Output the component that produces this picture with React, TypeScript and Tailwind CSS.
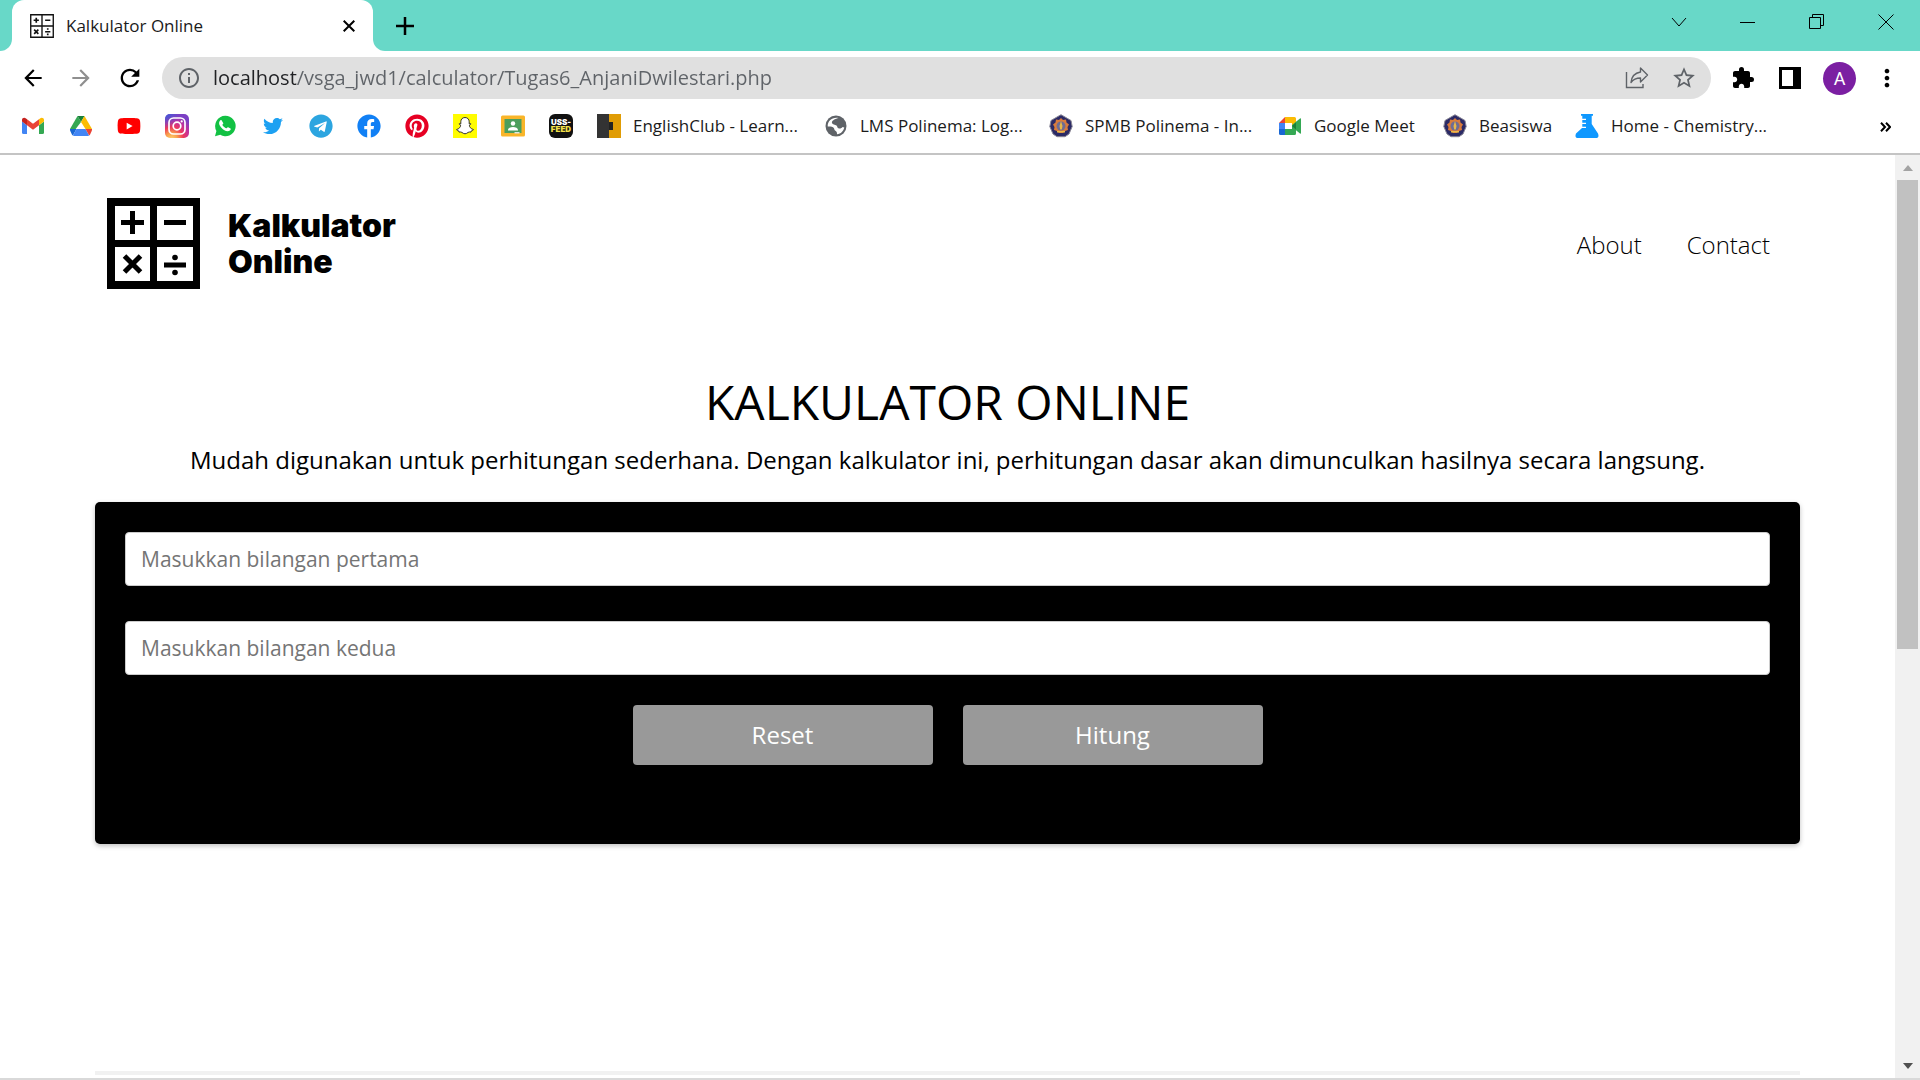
import type { ReactNode } from "react";
import {
  MdArrowBack,
  MdArrowForward,
  MdExtension,
  MdInfoOutline,
  MdMoreVert,
  MdRefresh,
  MdStarBorder,
} from "react-icons/md";
import { FaFacebook, FaPinterest, FaTelegram, FaTwitter, FaYoutube } from "react-icons/fa";

function CalculatorGlyph({ className }: { className: string }) {
  return (
    <svg viewBox="0 0 93 91" className={className} aria-hidden="true">
      <path fill="#000" d="M0 0h93v91H0z" />
      <path fill="#fff" d="M8 8h35v34H8zM50 8h36v34H50zM8 49h35v34H8zM50 49h36v34H50z" />
      <path
        fill="none"
        stroke="#000"
        strokeWidth="5"
        d="M14 24.500h23M25.500 13v23M57 24.500h22M57 67h22M17.500 58l16 16M33.500 58l-16 16"
      />
      <circle cx="68" cy="59.500" r="2.800" />
      <circle cx="68" cy="74.500" r="2.800" />
    </svg>
  );
}

function TabGlyph() {
  return (
    <svg viewBox="0 0 23 23" className="size-6 shrink-0" fill="none" stroke="#111" aria-hidden="true">
      <path strokeWidth="1.300" d="M.7.7h21.600v21.600H.7zM11.500 1v21.500M1 11.500h21.500" />
      <path strokeWidth="1.600" d="M3.500 6h5M6 3.500v5M14.500 6h5M14.500 17h5M4 15l4 4M8 15l-4 4" />
      <path strokeWidth="1.600" d="M17 13.600v1.600M17 18.800v1.600" />
    </svg>
  );
}

function Gmail() {
  return (
    <svg viewBox="0 0 24 24" className="size-6" aria-hidden="true">
      <path fill="#4285f4" d="M1 7.500l5 3.700V20H2.500A1.500 1.500 0 0 1 1 18.500z" />
      <path fill="#34a853" d="M18 11.200l5-3.700v11a1.500 1.500 0 0 1-1.500 1.500H18z" />
      <path fill="#ea4335" d="M6 5.200l6 4.500 6-4.500v6L12 15.700 6 11.200z" />
      <path fill="#c5221f" d="M1 6c0-2 2.300-3 4-1.600l1 .8v6L1 7.500z" />
      <path fill="#fbbc04" d="M23 6c0-2-2.300-3-4-1.600l-1 .8v6l5-3.700z" />
    </svg>
  );
}

function Drive() {
  return (
    <svg viewBox="0 0 24 24" className="size-6" aria-hidden="true">
      <path fill="#34a853" d="M8.500 2L1 15l3 1.500h1.500L12 8z" />
      <path fill="#188038" d="M8.500 2h7L12 8z" />
      <path fill="#fbbc04" d="M15.500 2L23 15h-6.500L12 8z" />
      <path fill="#1967d2" d="M1 15h6.500l-3.700 6.500c-.4-.2-.7-.5-.9-.9L1.300 17c-.3-.6-.4-1.300-.3-2z" />
      <path fill="#4285f4" d="M7.500 15h9l3.700 6.500c-.4.300-.9.500-1.500.5H5.300c-.6 0-1.100-.2-1.500-.5z" />
      <path fill="#ea4335" d="M16.500 15H23c.1.700 0 1.400-.3 2l-1.600 3.600c-.2.400-.5.700-.9.900z" />
    </svg>
  );
}

function Instagram() {
  return (
    <svg viewBox="0 0 24 24" className="size-6" aria-hidden="true">
      <defs>
        <radialGradient id="ig-warm" cx="0.270" cy="1.050" r="1">
          <stop offset="0" stopColor="#fed373" />
          <stop offset="0.250" stopColor="#f9a04b" />
          <stop offset="0.500" stopColor="#ee3a5a" />
          <stop offset="0.750" stopColor="#c22f9c" />
          <stop offset="1" stopColor="#7b3fc4" />
        </radialGradient>
        <radialGradient id="ig-cool" cx="0" cy="0" r="0.600">
          <stop offset="0" stopColor="#3f5bd8" />
          <stop offset="1" stopColor="#3f5bd8" stopOpacity="0" />
        </radialGradient>
      </defs>
      <rect width="24" height="24" rx="5" fill="url(#ig-warm)" />
      <rect width="24" height="24" rx="5" fill="url(#ig-cool)" />
      <rect x="4" y="4" width="16" height="16" rx="4.500" fill="none" stroke="#fff" strokeWidth="1.700" />
      <circle cx="12" cy="12" r="3.800" fill="none" stroke="#fff" strokeWidth="1.700" />
      <circle cx="16.700" cy="7.400" r="1.100" fill="#fff" />
    </svg>
  );
}

function WhatsApp() {
  return (
    <svg viewBox="0 0 24 24" className="size-6" aria-hidden="true">
      <path fill="#12c143" d="M12.200 1.800A10.200 10.200 0 0 0 3.400 17L2 22.200l5.300-1.400A10.200 10.200 0 1 0 12.200 1.800z" />
      <path
        fill="#fff"
        d="M8.700 6.500c-.4-.6-1-.5-1.500 0-2 2-1 4.800 1.200 7.200 2.500 2.700 5.800 4.700 8.500 2.900.9-.7 1.100-1.900.6-2.200l-2.300-1.200c-.4-.2-.7 0-1.500 1-.5.500-3.900-1.700-4.400-3.400.9-1 1.200-1.200.9-1.900z"
      />
    </svg>
  );
}

function Snapchat() {
  return (
    <svg viewBox="0 0 24 24" className="size-6" aria-hidden="true">
      <path fill="#fffc00" d="M0 0h24v24H0z" />
      <path
        fill="#fff"
        stroke="#333"
        strokeWidth="1"
        strokeLinejoin="round"
        d="M12 3.500c-2.700 0-4.200 1.900-4.200 4.300v2.100l-1.600-.2c-.3.700.8 1.100 1.400 1.500.3 1.400-1.600 3.900-4 4.300.1 1 1.400 1.200 2.100 1.400l.4 1.200c1-.2 2-.2 2.800.3.900.6 1.700 1.400 3.100 1.400s2.200-.8 3.100-1.400c.8-.5 1.800-.5 2.800-.3l.4-1.200c.7-.2 2-.4 2.100-1.400-2.400-.4-4.300-2.900-4-4.300.6-.4 1.700-.8 1.400-1.500l-1.600.2V7.800c0-2.400-1.500-4.300-4.200-4.300z"
      />
    </svg>
  );
}

function Classroom() {
  return (
    <svg viewBox="0 0 24 24" className="size-6" aria-hidden="true">
      <rect y="1.500" width="24" height="21" rx="1.500" fill="#f9b529" />
      <path fill="#4c9e5c" d="M3.500 5h17v14h-17z" />
      <circle cx="12" cy="9.500" r="2.200" fill="#fff" />
      <path fill="#fff" d="M7 16c0-2 2.500-3 5-3s5 1 5 3v.6H7z" />
      <path fill="#dfe7df" d="M13.500 18h5v1.500h-5z" />
    </svg>
  );
}

function UssFeed() {
  return (
    <span className="flex size-6 flex-col items-center justify-center rounded-md bg-[#111] font-['Inter'] text-[8px] leading-[7px] font-black text-white">
      <span>USS-</span>
      <span className="text-[#f3e04a]">FEED</span>
    </span>
  );
}

function EnglishClub() {
  return (
    <svg viewBox="0 0 24 24" className="size-6" aria-hidden="true">
      <path fill="#e09c05" d="M12 0h12v24H12z" />
      <path fill="#333" d="M0 0h12v8h4v8h-4v8H0z" />
      <path fill="#222" d="M12 8h4v8h-4z" />
    </svg>
  );
}

function Globe() {
  return (
    <svg viewBox="0 0 24 24" className="size-6" aria-hidden="true">
      <circle cx="12" cy="12" r="10.500" fill="#5f6368" />
      <path
        fill="#fff"
        d="M14.500 4C10 5 7.500 7 8 9c.5 1.800 3 1.500 4.500 2.500 1 .8.500 1.800 1.500 2.500 1.500 1 3.500.5 4.500-1l1.800.5C19.500 17 17 20 13 20.300c.3-2.300-1-3-2-3.800-1-1-.5-2.500-2-3.300-1.500-.7-3.500-.7-5.300-.7C3.500 7 8 3 14.500 4z"
      />
      <path fill="#5f6368" d="M14 4.500c-2 .8-3 2-2.500 3.300.5 1.200 2.500 1 3 2 .5.900 0 2 1.500 2.200 1.500.1 3-.5 4-1.500-.5-3.200-3-5.500-6-6z" />
    </svg>
  );
}

function Polinema() {
  return (
    <svg viewBox="0 0 24 24" className="size-6" aria-hidden="true">
      <path
        fill="#2b2a66"
        stroke="#8a8796"
        strokeWidth="1"
        d="M12 .7l4 2.300 6 3.500 1.200 6L20 20l-4 2.700H8L4 20 .8 12.500l1.200-6L8 3z"
      />
      <path
        fill="#d97b3c"
        d="M12 4l2 2 3-.5.500 3 2.500 2-1.500 2.500.5 3-3 1-2 2h-4l-2-2-3-1 .5-3L4 10.500l2.500-2 .5-3 3 .5z"
      />
      <circle cx="12" cy="12" r="4.500" fill="#6f6c94" />
      <path fill="#e8b84a" d="M12 7l1.500 5-.7 3.500h-1.600l-.7-3.500zM8 17h8v1.500H8z" />
    </svg>
  );
}

function Meet() {
  return (
    <svg viewBox="0 0 24 24" className="size-6" aria-hidden="true">
      <path fill="#ea4335" d="M7 3v6H1z" />
      <path fill="#4285f4" d="M1 9h6v6H1z" />
      <path fill="#1967d2" d="M1 15h6v6H2.500A1.500 1.500 0 0 1 1 19.500z" />
      <path fill="#fbbc04" d="M7 3h9.500A1.500 1.500 0 0 1 18 4.500V12l-4-1V9H7z" />
      <path fill="#34a853" d="M7 21v-6h7v-4l8-6.500c.5-.4 1-.1 1 .5v14c0 .6-.5.900-1 .5l-4-3.300v3.300a1.500 1.500 0 0 1-1.500 1.500z" />
      <path fill="#188038" d="M14 12l4-3.500v7z" />
    </svg>
  );
}

function Flask() {
  return (
    <svg viewBox="0 0 24 24" className="size-6" aria-hidden="true">
      <path
        fill="#0f98ff"
        d="M6 0h12v1.800h-1.300V10l6.300 9.500c1 2.500.5 4.500-2 4.500H3c-2.500 0-3-2-2-4.500L7 14h4v-1.300H7.300V10H11V8.700H7.300V6H11V4.700H7.300V1.800H6z"
      />
    </svg>
  );
}

const shortcuts: { name: string; icon: ReactNode }[] = [
  { name: "Gmail", icon: <Gmail /> },
  { name: "Google Drive", icon: <Drive /> },
  { name: "YouTube", icon: <FaYoutube className="size-6 text-[#f00]" /> },
  { name: "Instagram", icon: <Instagram /> },
  { name: "WhatsApp", icon: <WhatsApp /> },
  { name: "Twitter", icon: <FaTwitter className="size-5 text-[#1da1f2]" /> },
  { name: "Telegram", icon: <FaTelegram className="size-6 text-[#2ca5e0]" /> },
  { name: "Facebook", icon: <FaFacebook className="size-6 text-[#1180f5]" /> },
  { name: "Pinterest", icon: <FaPinterest className="size-6 text-[#e60023]" /> },
  { name: "Snapchat", icon: <Snapchat /> },
  { name: "Google Classroom", icon: <Classroom /> },
  { name: "USS Feed", icon: <UssFeed /> },
];

const bookmarks: { label: string; icon: ReactNode; width: string }[] = [
  { label: "EnglishClub - Learn...", icon: <EnglishClub />, width: "w-[227px]" },
  { label: "LMS Polinema: Log...", icon: <Globe />, width: "w-[225px]" },
  { label: "SPMB Polinema - In...", icon: <Polinema />, width: "w-[229px]" },
  { label: "Google Meet", icon: <Meet />, width: "w-[165px]" },
  { label: "Beasiswa", icon: <Polinema />, width: "w-[132px]" },
  { label: "Home - Chemistry...", icon: <Flask />, width: "w-[194px]" },
];

function TabStrip() {
  return (
    <header className="flex h-[51px] items-stretch bg-[#68d8c8]">
      <div className="w-3 bg-white">
        <div className="h-full rounded-br-xl bg-[#68d8c8]" />
      </div>
      <div className="bg-[#68d8c8]">
        <div className="flex h-full w-[361px] items-center gap-3 rounded-t-xl bg-white pr-3 pl-[18px]">
          <TabGlyph />
          <span className="flex-1 text-[17px] text-[#1b1b1b]">Kalkulator Online</span>
          <button type="button" aria-label="Close tab" className="flex size-6 items-center justify-center">
            <svg viewBox="0 0 12 12" className="size-3" stroke="#000" strokeWidth="2" aria-hidden="true">
              <path d="M.7.7l10.600 10.600M11.300.7L.7 11.300" />
            </svg>
          </button>
        </div>
      </div>
      <div className="flex-1 bg-white">
        <div className="flex h-full items-center rounded-bl-xl bg-[#68d8c8]">
          <button type="button" aria-label="New tab" className="ml-5 flex size-6 items-center justify-center">
            <svg viewBox="0 0 18 18" className="size-[18px]" stroke="#000" strokeWidth="2.500" aria-hidden="true">
              <path d="M0 9h18M9 0v18" />
            </svg>
          </button>
          <div className="ml-auto flex h-full items-start">
            <button type="button" aria-label="Search tabs" className="flex h-[43px] w-[68px] items-center justify-center">
              <svg viewBox="0 0 16 16" className="size-4" fill="none" stroke="#000" aria-hidden="true">
                <path d="M1 4l7 8 7-8" />
              </svg>
            </button>
            <button type="button" aria-label="Minimize" className="flex h-[43px] w-[69px] items-center justify-center">
              <svg viewBox="0 0 16 16" className="size-4" stroke="#000" aria-hidden="true">
                <path d="M0 8.500h15" />
              </svg>
            </button>
            <button type="button" aria-label="Restore" className="flex h-[43px] w-[69px] items-center justify-center">
              <svg viewBox="0 0 16 16" className="size-4" fill="none" stroke="#000" aria-hidden="true">
                <path d="M.5 3.500h11v11H.5zM3.500 3.500v-3h11v11h-3" />
              </svg>
            </button>
            <button type="button" aria-label="Close window" className="flex h-[43px] w-[69px] items-center justify-center">
              <svg viewBox="0 0 16 16" className="size-4" stroke="#000" aria-hidden="true">
                <path d="M.5.5l15 15M15.500.5l-15 15" />
              </svg>
            </button>
          </div>
        </div>
      </div>
    </header>
  );
}

function Toolbar() {
  return (
    <div className="flex items-center py-1.5 pr-[19px] pl-5">
      <div className="flex w-[142px] items-center gap-[22px]">
        <button type="button" aria-label="Back">
          <MdArrowBack className="size-[26px] text-black" />
        </button>
        <button type="button" aria-label="Forward">
          <MdArrowForward className="size-[26px] text-[#8f8f8f]" />
        </button>
        <button type="button" aria-label="Reload">
          <MdRefresh className="size-7 text-black" />
        </button>
      </div>
      <div className="flex h-[42px] flex-1 items-center rounded-full bg-[#e0e0e0] pr-[14px] pl-[15px]">
        <MdInfoOutline className="size-6 text-[#5f6368]" aria-hidden="true" />
        <input
          type="text"
          aria-label="Address"
          defaultValue="localhost/vsga_jwd1/calculator/Tugas6_AnjaniDwilestari.php"
          className="ml-3 min-w-0 flex-1 bg-[linear-gradient(90deg,#202124_84px,#5f6368_84px)] bg-clip-text text-[20px] text-transparent caret-black outline-none"
        />
        <button type="button" aria-label="Share" className="mr-[22px]">
          <svg viewBox="0 0 24 24" className="size-6" fill="none" stroke="#5f6368" strokeWidth="1.400" aria-hidden="true">
            <path d="M1.500 6v15.500H18V18" />
            <path strokeLinejoin="round" d="M15.500 2l7 7-7 7v-4c-4 0-7 1-9.500 4.500C6.500 11 9.500 7 15.500 6z" />
          </svg>
        </button>
        <button type="button" aria-label="Bookmark this page">
          <MdStarBorder className="size-[26px] text-[#5f6368]" />
        </button>
      </div>
      <div className="ml-5 flex items-center">
        <button type="button" aria-label="Extensions" className="mr-6">
          <MdExtension className="size-6 text-black" />
        </button>
        <button type="button" aria-label="Side panel" className="mr-[22px]">
          <svg viewBox="0 0 22 22" className="size-[22px]" aria-hidden="true">
            <path d="M0 0h22v22H0z" />
            <path fill="#fff" d="M3 3h11v16H3z" />
          </svg>
        </button>
        <button
          type="button"
          aria-label="Profile"
          className="mr-[17px] flex size-[33px] items-center justify-center rounded-full bg-[#7b1fa2] font-['Roboto'] text-[18px] text-white"
        >
          A
        </button>
        <button type="button" aria-label="Menu">
          <MdMoreVert className="size-7 text-black" />
        </button>
      </div>
    </div>
  );
}

function BookmarksBar() {
  return (
    <nav aria-label="Bookmarks" className="flex h-[50px] items-start border-b-2 border-[#c4c4c4] pt-[9px] pl-[21px]">
      {shortcuts.map((item) => (
        <a key={item.name} href="#" aria-label={item.name} className="mr-6 flex size-6 shrink-0 items-center justify-center">
          {item.icon}
        </a>
      ))}
      {bookmarks.map((item) => (
        <a key={item.label} href="#" className={`flex shrink-0 items-center gap-3 whitespace-nowrap ${item.width}`}>
          <span className="shrink-0">{item.icon}</span>
          <span className="text-[17px] leading-6 text-[#1b1b1b]">{item.label}</span>
        </a>
      ))}
      <button type="button" aria-label="More bookmarks" className="mt-2 mr-[29px] ml-auto">
        <svg viewBox="0 0 11 10" className="h-2.5 w-[11px]" fill="none" stroke="#000" strokeWidth="2" aria-hidden="true">
          <path d="M1 .7L5 5 1 9.300M6 .7L10 5 6 9.300" />
        </svg>
      </button>
    </nav>
  );
}

function Scrollbar() {
  return (
    <div className="flex w-[25px] shrink-0 flex-col items-center bg-[#f1f1f1]" aria-hidden="true">
      <div className="flex h-[25px] items-center">
        <svg viewBox="0 0 10 6" className="h-1.5 w-2.5">
          <path fill="#a3a3a3" d="M5 0l5 6H0z" />
        </svg>
      </div>
      <div className="flex w-[21px] flex-1 flex-col">
        <div className="h-[469px] bg-[#c1c1c1]" />
      </div>
      <div className="flex h-[25px] items-center">
        <svg viewBox="0 0 10 6" className="h-1.5 w-2.5">
          <path fill="#505050" d="M5 6l5-6H0z" />
        </svg>
      </div>
    </div>
  );
}

function SiteHeader() {
  return (
    <div className="flex items-center justify-between pt-[43px] pr-[30px] pl-3">
      <a href="#" className="flex items-center gap-7">
        <CalculatorGlyph className="h-[91px] w-[93px]" />
        <span className="font-['Inter'] text-[32px] leading-9 font-black text-black">
          Kalkulator
          <br />
          Online
        </span>
      </a>
      <nav aria-label="Main" className="flex gap-[45px] pt-0.5 text-[24px] leading-9 font-light text-black">
        <a href="#about">About</a>
        <a href="#contact">Contact</a>
      </nav>
    </div>
  );
}

function CalculatorForm() {
  return (
    <form
      className="mt-6 rounded-[5px] bg-black px-[30px] pt-[30px] pb-[79px] shadow-[0_2px_5px_rgba(0,0,0,0.25)]"
      onSubmit={(event) => event.preventDefault()}
    >
      <input
        type="text"
        aria-label="Bilangan pertama"
        placeholder="Masukkan bilangan pertama"
        className="mb-[35px] block h-[54px] w-full rounded-[4px] border border-[#ccc] bg-white px-[15px] text-[21px] text-black placeholder:text-[#757575]"
      />
      <input
        type="text"
        aria-label="Bilangan kedua"
        placeholder="Masukkan bilangan kedua"
        className="mb-[30px] block h-[54px] w-full rounded-[4px] border border-[#ccc] bg-white px-[15px] text-[21px] text-black placeholder:text-[#757575]"
      />
      <div className="flex justify-center gap-[30px]">
        <button type="reset" className="h-[60px] w-[300px] rounded-[4px] bg-[#999] text-[24px] text-white">
          Reset
        </button>
        <button type="submit" className="h-[60px] w-[300px] rounded-[4px] bg-[#999] text-[24px] text-white">
          Hitung
        </button>
      </div>
    </form>
  );
}

export default function App() {
  return (
    <div className="flex min-h-screen flex-col bg-white font-['Open_Sans',sans-serif]">
      <TabStrip />
      <Toolbar />
      <BookmarksBar />
      <div className="flex flex-1 border-b-2 border-[#d9d9d9]">
        <main className="flex flex-1 flex-col px-[95px]">
          <SiteHeader />
          <section className="mt-[77px] text-center text-black">
            <h1 className="text-[48px] leading-[72px]">KALKULATOR ONLINE</h1>
            <p className="mt-1 text-[24px] leading-9">
              Mudah digunakan untuk perhitungan sederhana. Dengan kalkulator ini, perhitungan dasar akan dimunculkan
              hasilnya secara langsung.
            </p>
          </section>
          <CalculatorForm />
          <hr className="mt-auto mb-[3px] border-t-4 border-[#f1f1f1]" />
        </main>
        <Scrollbar />
      </div>
    </div>
  );
}
